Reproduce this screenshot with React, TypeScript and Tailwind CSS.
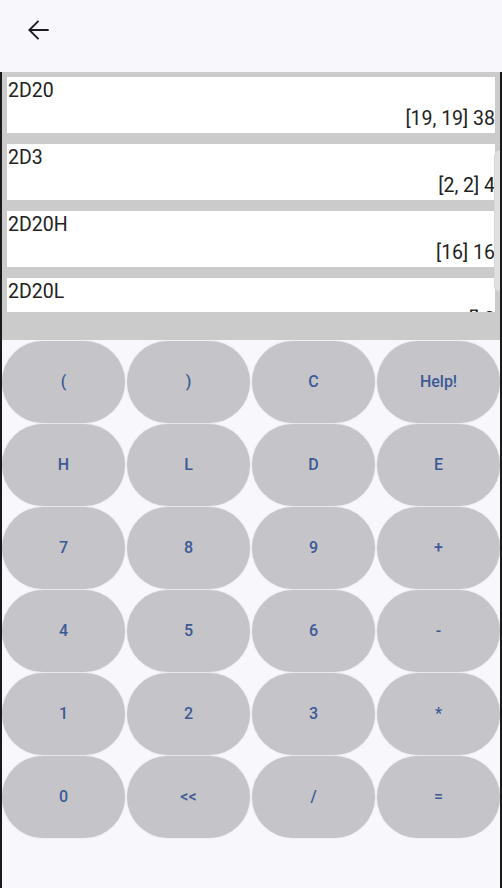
const items = [
  { name: '2D20', detail: '[19, 19] 38' },
  { name: '2D3', detail: '[2, 2] 4' },
  { name: '2D20H', detail: '[16] 16' },
  { name: '2D20L', detail: '[] 0' },
];

const keys = [
  '(', ')', 'C', 'Help!',
  'H', 'L', 'D', 'E',
  '7', '8', '9', '+',
  '4', '5', '6', '-',
  '1', '2', '3', '*',
  '0', '<<', '/', '=',
];

export default function App() {
  return (
    <div className="w-[502px] h-[888px] bg-[#f8f7fb] overflow-hidden flex flex-col" style={{ fontFamily: 'Roboto, "Noto Sans", sans-serif' }}>
      <div className="h-[72px] shrink-0 pl-[22px] pt-[14px]">
        <svg width="32" height="32" viewBox="0 0 24 24" className="text-[#1d1b20]">
          <path fill="currentColor" d="M20 11.25H7.3l5.6-5.6L11.9 4.6 4.5 12l7.4 7.4 1-1-5.6-5.65H20v-1.5z" />
        </svg>
      </div>

      <div className="flex-1 flex border-x-2 border-[#1a1a1a]">
        <div className="flex-1 flex flex-col">
          <div className="h-[268px] bg-[#cbcbcb] relative">
            <div className="h-[240px] overflow-hidden px-[5px] pt-[5px] flex flex-col gap-[11px]">
              {items.map((it) => (
                <div key={it.name} className="h-[56px] shrink-0 bg-white pl-[1px] flex flex-col text-[19.5px] leading-[24px] text-[#222222] overflow-hidden">
                  <div className="pt-[2px]">{it.name}</div>
                  <div className="text-right mt-[4px] whitespace-nowrap">{it.detail}</div>
                </div>
              ))}
            </div>
            <div className="absolute right-0 top-[78px] w-[6px] h-[142px] rounded-l-full border border-r-0 border-[#d6d6d6] bg-white/40" />
          </div>

          <div className="grid grid-cols-4 gap-x-[2px] gap-y-[1px] pt-[1px]">
            {keys.map((k) => (
              <div
                key={k}
                className="h-[82px] rounded-full bg-[#c5c4c8] shadow-[0_0_2px_rgba(0,0,0,0.12)] flex items-center justify-center text-[16px] font-medium text-[#3c5a97]"
              >
                {k}
              </div>
            ))}
          </div>
        </div>
      </div>
    </div>
  );
}
